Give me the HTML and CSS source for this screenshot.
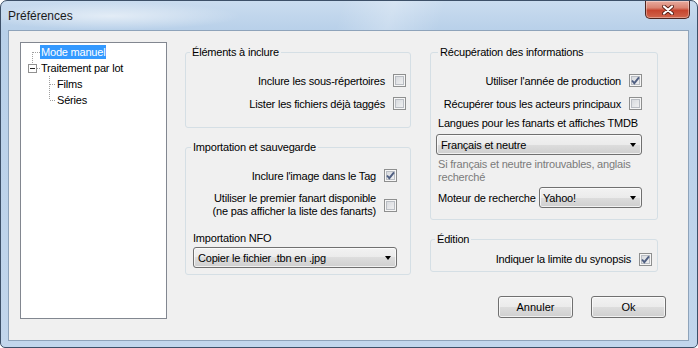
FILE: index.html
```html
<!DOCTYPE html>
<html lang="fr">
<head>
    <meta charset="UTF-8">
    <title>Préférences</title>
    <link rel="stylesheet" href="styles.css">
</head>
<body>
<div class="window">
    <div class="titlebar">
        <span class="title">Préférences</span>
        <button class="close" aria-label="Fermer">
            <svg width="12" height="10" viewBox="0 0 12 10">
                <path d="M2 1.5 L10 8.5 M10 1.5 L2 8.5" stroke="#5a2118" stroke-width="4" stroke-linecap="round"/>
                <path d="M2 1.5 L10 8.5 M10 1.5 L2 8.5" stroke="#fff" stroke-width="2.2" stroke-linecap="round"/>
            </svg>
        </button>
    </div>

    <div class="client">
        <div class="tree">
            <div class="node">
                <svg class="lines" width="19" height="16"><path d="M11.5 8 V16 M12 8.5 H19" class="dots"/></svg>
                <span class="label selected">Mode manuel</span>
            </div>
            <div class="node">
                <svg class="lines" width="19" height="16">
                    <path d="M11.5 0 V4 M16 8.5 H19" class="dots"/>
                    <rect x="7.5" y="4.5" width="8" height="8" fill="#fff" stroke="#919191"/>
                    <path d="M9 8.5 H14" stroke="#222"/>
                </svg>
                <span class="label">Traitement par lot</span>
            </div>
            <div class="node">
                <svg class="lines" width="35" height="16"><path d="M28.5 0 V16 M29 8.5 H35" class="dots"/></svg>
                <span class="label">Films</span>
            </div>
            <div class="node">
                <svg class="lines" width="35" height="16"><path d="M28.5 0 V8 M29 8.5 H35" class="dots"/></svg>
                <span class="label">Séries</span>
            </div>
        </div>

        <div class="main">
            <div class="columns">
                <div class="col col-left">
                    <fieldset class="group g-include">
                        <legend>Éléments à inclure</legend>
                        <label class="check-row"><span>Inclure les sous-répertoires</span><span class="box"></span></label>
                        <label class="check-row"><span>Lister les fichiers déjà taggés</span><span class="box"></span></label>
                    </fieldset>

                    <fieldset class="group g-import">
                        <legend>Importation et sauvegarde</legend>
                        <label class="check-row"><span>Inclure l'image dans le Tag</span><span class="box checked"><svg width="11" height="11" viewBox="0 0 11 11"><path d="M2 5.5 L4.3 8.2 L9 2.3"/></svg></span></label>
                        <label class="check-row multi"><span>Utiliser le premier fanart disponible<br>(ne pas afficher la liste des fanarts)</span><span class="box"></span></label>
                        <div class="field-label nfo-label">Importation NFO</div>
                        <div class="combo combo-nfo"><span>Copier le fichier .tbn en .jpg</span><i class="arrow"></i></div>
                    </fieldset>
                </div>

                <div class="col col-right">
                    <fieldset class="group g-fetch">
                        <legend>Récupération des informations</legend>
                        <label class="check-row"><span>Utiliser l'année de production</span><span class="box checked"><svg width="11" height="11" viewBox="0 0 11 11"><path d="M2 5.5 L4.3 8.2 L9 2.3"/></svg></span></label>
                        <label class="check-row"><span>Récupérer tous les acteurs principaux</span><span class="box"></span></label>
                        <div class="field-label lang-label">Langues pour les fanarts et affiches TMDB</div>
                        <div class="combo combo-lang"><span>Français et neutre</span><i class="arrow"></i></div>
                        <p class="hint">Si français et neutre introuvables, anglais<br>recherché</p>
                        <div class="engine-row">
                            <span class="engine-label">Moteur de recherche</span>
                            <div class="combo combo-engine"><span>Yahoo!</span><i class="arrow"></i></div>
                        </div>
                    </fieldset>

                    <fieldset class="group g-edit">
                        <legend>Édition</legend>
                        <label class="check-row"><span>Indiquer la limite du synopsis</span><span class="box checked"><svg width="11" height="11" viewBox="0 0 11 11"><path d="M2 5.5 L4.3 8.2 L9 2.3"/></svg></span></label>
                    </fieldset>
                </div>
            </div>

            <div class="buttons">
                <button class="btn">Annuler</button>
                <button class="btn">Ok</button>
            </div>
        </div>
    </div>
</div>
</body>
</html>
```

FILE: styles.css
```css
* {
    box-sizing: border-box;
}
body {
    margin: 0;
    width: 698px;
    height: 348px;
    overflow: hidden;
    font-family: "Liberation Sans", Arial, sans-serif;
    font-size: 11px;
    letter-spacing: -0.2px;
    color: #000;
    background: #fff;
}
.window {
    height: 348px;
    display: flex;
    flex-direction: column;
    padding: 0 8px 6px 7px;
    border: 1px solid #3d5068;
    border-radius: 7px 7px 5px 5px;
    background:
        radial-gradient(ellipse 130px 14px at 110px 15px, rgba(255,255,255,0.55), rgba(255,255,255,0) 100%) no-repeat,
        linear-gradient(105deg, rgba(255,255,255,0) 0, rgba(255,255,255,0) 330px, rgba(255,255,255,0.25) 380px, rgba(255,255,255,0) 430px) top / 100% 30px no-repeat,
        linear-gradient(to bottom, #cadcef 0, #b8d0e9 30px, #c2d6ec 100%);
}
.titlebar {
    height: 29px;
    display: flex;
    align-items: center;
    justify-content: space-between;
}
.title {
    font-size: 12px;
    letter-spacing: 0;
    color: #1a1a1a;
    margin-top: 1px;
}
.close {
    align-self: flex-start;
    width: 45px;
    height: 18px;
    margin-right: -1px;
    padding: 0;
    border: 1px solid #4d251f;
    border-top: none;
    border-radius: 0 0 5px 5px;
    background: linear-gradient(to bottom, #e8ab9e 0, #d98472 40%, #c6452f 55%, #d0664d 100%);
    box-shadow: inset 0 0 0 1px rgba(255,255,255,0.35);
    display: flex;
    align-items: center;
    justify-content: center;
}
.client {
    flex: 1;
    display: flex;
    align-items: flex-start;
    padding: 11px 11px 0 11px;
    background: #f0f0f0;
    border: 1px solid #8ea3ba;
}

/* tree */
.tree {
    flex: none;
    width: 147px;
    height: 277px;
    padding-top: 1px;
    border: 1px solid #828790;
    background: #fff;
}
.node {
    height: 16px;
    display: flex;
    align-items: center;
}
.lines {
    flex: none;
    display: block;
}
.dots {
    stroke: #a0a0a0;
    stroke-dasharray: 1 1;
    fill: none;
}
.label {
    padding: 0 1px;
    line-height: 14px;
    white-space: nowrap;
}
.label.selected {
    background: #3399ff;
    color: #fff;
}

/* right side */
.main {
    flex: 1;
    margin-left: 18px;
    display: flex;
    flex-direction: column;
}
.columns {
    display: flex;
    gap: 19px;
    margin-top: 4px;
}
.col-left {
    width: 226px;
}
.col-right {
    width: 228px;
}
.group {
    margin: 0;
    min-width: 0;
    padding: 10px 4px 12px 0;
    border: 1px solid #d5dfe5;
    border-radius: 3px;
}
.group legend {
    padding: 0 2px;
    margin-left: 4px;
    line-height: 13px;
}
.check-row {
    display: flex;
    justify-content: flex-end;
    align-items: center;
    gap: 8px;
    height: 23px;
    white-space: nowrap;
}
.check-row.multi {
    height: auto;
    margin-top: 5px;
    text-align: right;
    line-height: 13px;
}
.box {
    flex: none;
    width: 13px;
    height: 13px;
    border: 1px solid #8e8f8f;
    background: linear-gradient(135deg, #d2d5da 0, #f5f5f5 100%);
    box-shadow: inset 0 0 0 1px #f6f6f6, inset 0 0 0 2px #b9bdc3;
    display: flex;
    align-items: center;
    justify-content: center;
}
.box svg path {
    fill: none;
    stroke: #4f5f82;
    stroke-width: 1.9;
}
.field-label {
    line-height: 13px;
    white-space: nowrap;
}

.g-import {
    margin-top: 13px;
    padding: 10px 13px 6px 7px;
}
.g-import legend {
    margin-left: -2px;
}
.nfo-label {
    margin-top: 14px;
}
.combo {
    height: 21px;
    display: flex;
    align-items: center;
    justify-content: space-between;
    padding: 0 5px 0 4px;
    border: 1px solid #707070;
    border-radius: 3px;
    background: linear-gradient(to bottom, #f2f2f2 0, #ebebeb 50%, #dddddd 50%, #cfcfcf 100%);
    box-shadow: inset 0 0 0 1px rgba(255,255,255,0.7);
    white-space: nowrap;
}
.arrow {
    width: 0;
    height: 0;
    border-left: 3.5px solid transparent;
    border-right: 3.5px solid transparent;
    border-top: 4px solid #000;
}
.combo-nfo {
    margin-top: 2px;
    width: 204px;
}

.g-fetch {
    padding: 10px 15px 11px 7px;
}
.g-fetch legend {
    margin-left: 0;
}
.lang-label {
    margin-top: 2px;
}
.combo-lang {
    margin-top: 4px;
    margin-left: -2px;
    width: 206px;
}
.hint {
    margin: 3px 0 0;
    line-height: 13px;
    color: #7b7b7b;
}
.engine-row {
    margin-top: 3px;
    display: flex;
    align-items: center;
}
.engine-label {
    flex: none;
    white-space: nowrap;
}
.combo-engine {
    flex: none;
    margin-left: auto;
    width: 103px;
    padding-left: 3px;
}

.g-edit {
    margin-top: 13px;
    padding: 3px 5px 2px 0;
}
.g-edit .check-row {
    height: 20px;
}

.buttons {
    display: flex;
    justify-content: flex-end;
    gap: 18px;
    margin-top: 21px;
    padding-right: 11px;
}
.btn {
    width: 75px;
    height: 22px;
    padding: 0;
    font: inherit;
    color: #000;
    border: 1px solid #707070;
    border-radius: 3px;
    background: linear-gradient(to bottom, #f2f2f2 0, #ebebeb 50%, #dddddd 50%, #cfcfcf 100%);
    box-shadow: inset 0 0 0 1px rgba(255,255,255,0.7);
}
```
